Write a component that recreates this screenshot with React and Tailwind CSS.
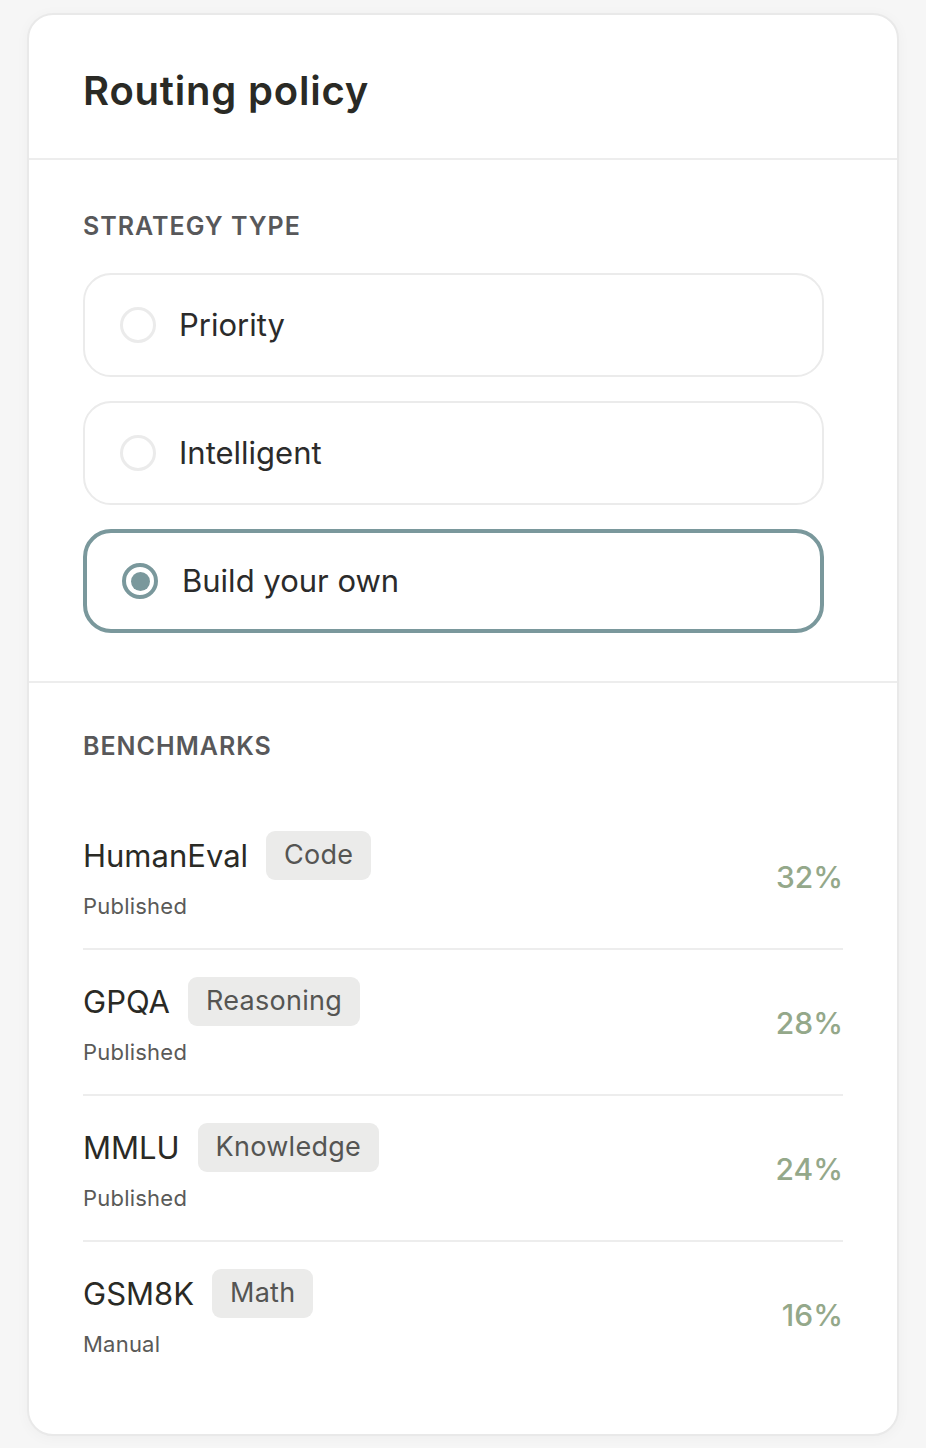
import React from "react";

const options = [
  { label: "Priority", selected: false },
  { label: "Intelligent", selected: false },
  { label: "Build your own", selected: true },
];

const benchmarks = [
  { name: "HumanEval", tag: "Code", source: "Published", pct: "32%" },
  { name: "GPQA", tag: "Reasoning", source: "Published", pct: "28%" },
  { name: "MMLU", tag: "Knowledge", source: "Published", pct: "24%" },
  { name: "GSM8K", tag: "Math", source: "Manual", pct: "16%" },
];

function Radio({ selected }) {
  if (selected) {
    return (
      <span className="flex h-[36px] w-[36px] shrink-0 items-center justify-center rounded-full border-[4px] border-[#7a989c]">
        <span className="h-[19px] w-[19px] rounded-full bg-[#7a989c]" />
      </span>
    );
  }
  return <span className="h-[36px] w-[36px] shrink-0 rounded-full border-[3px] border-[#ebebeb]" />;
}

export default function App() {
  return (
    <div
      className="min-h-[1448px] bg-[#f6f6f6] pl-[27px] pr-[27px] pt-[13px]"
      style={{ fontFamily: "Inter, 'Noto Sans', sans-serif" }}
    >
      <div className="overflow-hidden rounded-[26px] border-[2px] border-[#e9e9e9] bg-white shadow-[0_2px_14px_rgba(0,0,0,0.035)]">
        {/* Header */}
        <div className="border-b-[2px] border-[#ededed] pl-[54px] pr-[54px] pt-[52px] pb-[43px]">
          <h1 className="text-[40px] font-semibold leading-[48px] tracking-[0.02em] text-[#2a2a25]">
            Routing policy
          </h1>
        </div>

        {/* Strategy type */}
        <div className="border-b-[2px] border-[#ededed] pl-[54px] pr-[54px] pt-[50px] pb-[48px]">
          <div className="text-[25px] font-semibold uppercase leading-[32px] tracking-[0.04em] text-[#58585a]">
            Strategy type
          </div>
          <div className="mt-[31px] flex w-[741px] flex-col gap-[24px]">
            {options.map((o) => (
              <div
                key={o.label}
                className={
                  o.selected
                    ? "flex h-[104px] items-center gap-[24px] rounded-[28px] border-[4px] border-[#7a989c] pl-[35px]"
                    : "flex h-[104px] items-center gap-[23px] rounded-[28px] border-[2px] border-[#ebebeb] pl-[35px]"
                }
              >
                <Radio selected={o.selected} />
                <span className="text-[31px] leading-[40px] text-[#2b2b2b]">{o.label}</span>
              </div>
            ))}
          </div>
        </div>

        {/* Benchmarks */}
        <div className="pl-[54px] pr-[54px] pt-[47px] pb-[48px]">
          <div className="text-[25px] font-semibold uppercase leading-[32px] tracking-[0.04em] text-[#58585a]">
            Benchmarks
          </div>
          <div className="mt-[69px] flex flex-col">
            {benchmarks.map((b, i) => (
              <div
                key={b.name}
                className={
                  (i === 0 ? "pt-0 " : "pt-[27px] ") +
                  (i === benchmarks.length - 1 ? "" : "border-b-[2px] border-[#ededed] ") +
                  "flex items-center justify-between pb-[27px]"
                }
              >
                <div className="flex flex-col">
                  <div className="flex items-center gap-[18px]">
                    <span className="text-[31px] leading-[40px] text-[#2a2a25]">{b.name}</span>
                    <span className="flex h-[49px] items-center rounded-[9px] bg-[#ebebea] px-[18px] text-[27px] tracking-[0.01em] text-[#555553]">
                      {b.tag}
                    </span>
                  </div>
                  <span className="mt-[11px] text-[22px] leading-[30px] tracking-[0.01em] text-[#5a5a58]">
                    {b.source}
                  </span>
                </div>
                <span className="mt-[3px] text-[30px] font-medium text-[#94a88a]">{b.pct}</span>
              </div>
            ))}
          </div>
        </div>
      </div>
    </div>
  );
}
